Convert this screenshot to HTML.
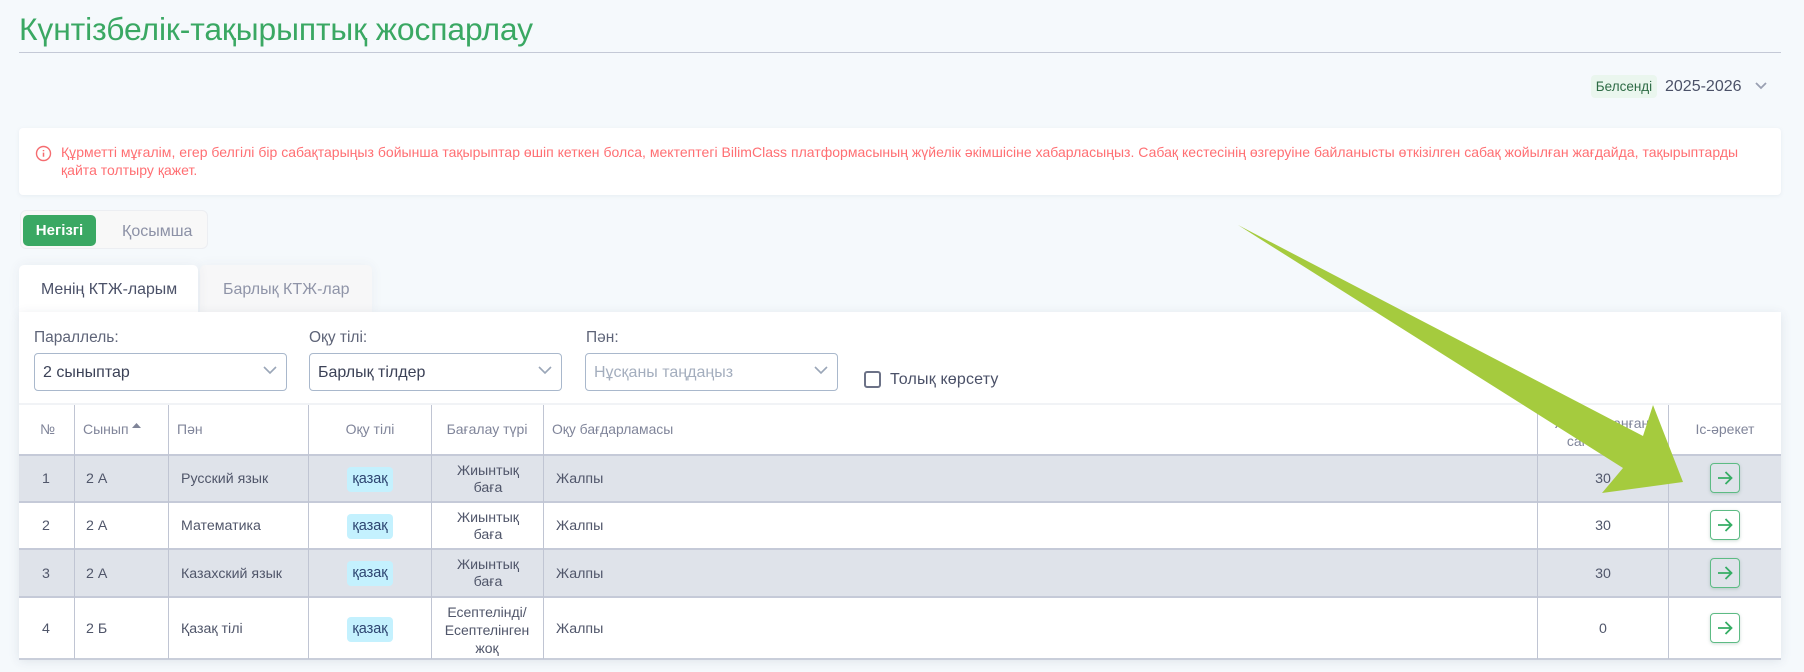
<!DOCTYPE html>
<html lang="kk"><head><meta charset="utf-8"><title>Күнтізбелік-тақырыптық жоспарлау</title>
<style>
html,body{margin:0;padding:0;width:1804px;height:672px;overflow:hidden;background:#f5f9fc}
body{position:relative;font-family:"Liberation Sans","DejaVu Sans",sans-serif;color:#4b5168}
.a{position:absolute;white-space:nowrap}
.c{text-align:center;transform:translateX(-50%)}
.box{position:absolute;background:#fff;box-sizing:border-box}
.sel{position:absolute;top:353px;width:253px;height:38px;box-sizing:border-box;border:1px solid #a9b8cc;border-radius:4px;background:#fff;font-size:16px;line-height:37px;padding-left:8px;color:#3c4257}
.sel svg{position:absolute;right:8px;top:11px}
.lb{font-size:15.5px;color:#5e6478;top:329px}
.h{font-size:14px;color:#80859a;top:422px}
.t{font-size:14.2px;color:#50566a}
.row{position:absolute;left:19px;width:1762px;box-sizing:border-box;border-bottom:2px solid #c5cad8}
.v{position:absolute;top:405px;width:1px;height:254px;background:#c0c5d3}
.tag{position:absolute;left:347px;width:46px;height:25px;background:#c4f1fe;border-radius:4px;font-size:14.5px;line-height:25px;text-align:center;color:#2c4470}
.btn{position:absolute;left:1710px;width:27.5px;height:27.5px;border:1.5px solid #5dbb84;border-radius:4px;box-shadow:0 1px 3px rgba(60,120,90,.25)}
.btn svg{position:absolute;left:3.750px;top:3.750px}
</style></head><body>
<div class="a" style="left:19px;top:9px;font-size:31.8px;line-height:40px;color:#3aa863;letter-spacing:-.1px">Күнтізбелік-тақырыптық жоспарлау</div>
<div class="a" style="left:19px;top:52px;width:1762px;height:1px;background:#c4c9d6"></div>

<div class="a" style="left:1591px;top:75px;width:66px;height:23px;background:#eaf6ee;border-radius:4px;font-size:13.5px;line-height:23px;text-align:center;color:#2d6b45">Белсенді</div>
<div class="a" style="left:1665px;top:76px;font-size:16px;line-height:22px;color:#4b5168">2025-2026</div>
<svg class="a" style="left:1754px;top:81px" width="14" height="10" viewBox="0 0 14 10"><path d="M2 2l5 5 5-5" fill="none" stroke="#9aa0b2" stroke-width="1.8"/></svg>

<div class="box" style="left:19px;top:128px;width:1762px;height:67px;border-radius:4px;box-shadow:0 1px 4px rgba(70,90,120,.08)"></div>
<svg class="a" style="left:35px;top:145px" width="17" height="17" viewBox="0 0 17 17"><circle cx="8.500" cy="8.500" r="7" fill="none" stroke="#f56c70" stroke-width="1.4"/><path d="M8.500 7.600v4.200M8.500 5v1.300" stroke="#f56c70" stroke-width="1.500"/></svg>
<div class="a" style="left:61px;top:143px;font-size:14px;line-height:18.4px;color:#ff6f73;letter-spacing:.02px">Құрметті мұғалім, егер белгілі бір сабақтарыңыз бойынша тақырыптар өшіп кеткен болса, мектептегі BilimClass платформасының жүйелік әкімшісіне хабарласыңыз. Сабақ кестесінің өзгеруіне байланысты өткізілген сабақ жойылған жағдайда, тақырыптарды<br>қайта толтыру қажет.</div>

<div class="box" style="left:20px;top:210px;width:188px;height:39px;background:#f8f8f8;border:1px solid #eceef2;border-radius:6px"></div>
<div class="a" style="left:23px;top:215px;width:73px;height:31px;background:#3aa863;border-radius:5px;color:#fff;font-size:15px;font-weight:bold;line-height:32px;text-align:center">Негізгі</div>
<div class="a" style="left:122px;top:223px;font-size:16px;line-height:18px;color:#8c91a6">Қосымша</div>

<div class="box" style="left:200px;top:265px;width:172px;height:50px;background:#f7f7f8;border-radius:5px 5px 0 0;box-shadow:0 0 12px rgba(60,70,100,.06)"></div>
<div class="box" style="left:19px;top:265px;width:179px;height:50px;border-radius:5px 5px 0 0;box-shadow:0 0 12px rgba(60,70,100,.07)"></div>
<div class="a" style="left:41px;top:281px;font-size:15.9px;line-height:18px;color:#4b5168">Менің КТЖ-ларым</div>
<div class="a" style="left:223px;top:281px;font-size:16px;line-height:18px;color:#8f94a8">Барлық КТЖ-лар</div>

<div class="box" style="left:19px;top:312px;width:1762px;height:347px;box-shadow:0 2px 10px rgba(60,70,100,.12)"></div>

<div class="a lb" style="left:34px">Параллель:</div>
<div class="a lb" style="left:309px">Оқу тілі:</div>
<div class="a lb" style="left:586px">Пән:</div>
<div class="sel" style="left:34px">2 сыныптар<svg width="16" height="12" viewBox="0 0 16 12"><path d="M2 2l6 6 6-6" fill="none" stroke="#9aa6b8" stroke-width="1.6"/></svg></div>
<div class="sel" style="left:309px">Барлық тілдер<svg width="16" height="12" viewBox="0 0 16 12"><path d="M2 2l6 6 6-6" fill="none" stroke="#9aa6b8" stroke-width="1.6"/></svg></div>
<div class="sel" style="left:585px;color:#a4aebe">Нұсқаны таңдаңыз<svg width="16" height="12" viewBox="0 0 16 12"><path d="M2 2l6 6 6-6" fill="none" stroke="#9aa6b8" stroke-width="1.6"/></svg></div>
<div class="a" style="left:864px;top:371px;width:17px;height:17px;box-sizing:border-box;border:2px solid #6c7287;border-radius:3px;background:#fff"></div>
<div class="a" style="left:890px;top:370px;font-size:16px;line-height:20px;letter-spacing:.2px;color:#4b5168">Толық көрсету</div>

<div class="a" style="left:19px;top:403px;width:1762px;height:2px;background:#f1f3f6"></div>
<div class="row" style="top:405px;height:51px;background:#fff"></div>
<div class="row" style="top:456px;height:47px;background:#dfe3ea"></div>
<div class="row" style="top:503px;height:47px;background:#fff"></div>
<div class="row" style="top:550px;height:48px;background:#dfe3ea"></div>
<div class="row" style="top:598px;height:62px;background:#fff;border-bottom-color:#c9ceda"></div>

<div class="v" style="left:74px"></div><div class="v" style="left:168px"></div><div class="v" style="left:308px"></div><div class="v" style="left:431px"></div><div class="v" style="left:543px"></div><div class="v" style="left:1537px"></div><div class="v" style="left:1668px"></div>

<div class="a h" style="left:40px;top:421px">№</div>
<div class="a h" style="left:83px;top:421px">Сынып</div>
<svg class="a" style="left:132px;top:423px" width="9" height="6" viewBox="0 0 9 6"><path d="M4.500 0L9 5H0z" fill="#7f8498"/></svg>
<div class="a h" style="left:177px;top:421px">Пән</div>
<div class="a h c" style="left:370px;top:421px">Оқу тілі</div>
<div class="a h c" style="left:487px;top:421px">Бағалау түрі</div>
<div class="a h" style="left:552px;top:421px;font-size:13.9px">Оқу бағдарламасы</div>
<div class="a h c" style="left:1602px;top:414px;line-height:18px">Жоспарланған<br>сағат саны</div>
<div class="a h c" style="left:1725px;top:421px">Іс-әрекет</div>

<div class="a t c" style="left:46px;top:471px">1</div><div class="a t" style="left:86px;top:471px">2 А</div><div class="a t" style="left:181px;top:471px">Русский язык</div>
<div class="tag" style="top:467px">қазақ</div>
<div class="a t c" style="left:488px;top:463px;line-height:17px">Жиынтық<br>баға</div><div class="a t" style="left:556px;top:471px">Жалпы</div><div class="a t c" style="left:1603px;top:471px">30</div>

<div class="a t c" style="left:46px;top:518px">2</div><div class="a t" style="left:86px;top:518px">2 А</div><div class="a t" style="left:181px;top:518px">Математика</div>
<div class="tag" style="top:514px">қазақ</div>
<div class="a t c" style="left:488px;top:510px;line-height:17px">Жиынтық<br>баға</div><div class="a t" style="left:556px;top:518px">Жалпы</div><div class="a t c" style="left:1603px;top:518px">30</div>

<div class="a t c" style="left:46px;top:566px">3</div><div class="a t" style="left:86px;top:566px">2 А</div><div class="a t" style="left:181px;top:566px">Казахский язык</div>
<div class="tag" style="top:561px">қазақ</div>
<div class="a t c" style="left:488px;top:557px;line-height:17px">Жиынтық<br>баға</div><div class="a t" style="left:556px;top:566px">Жалпы</div><div class="a t c" style="left:1603px;top:566px">30</div>

<div class="a t c" style="left:46px;top:621px">4</div><div class="a t" style="left:86px;top:621px">2 Б</div><div class="a t" style="left:181px;top:621px">Қазақ тілі</div>
<div class="tag" style="top:617px">қазақ</div>
<div class="a t c" style="left:487px;top:603px;line-height:18px;font-size:14px">Есептелінді/<br>Есептелінген<br>жоқ</div><div class="a t" style="left:556px;top:621px">Жалпы</div><div class="a t c" style="left:1603px;top:621px">0</div>

<div class="btn" style="top:463px"><svg width="20" height="20" viewBox="0 0 20 20"><path d="M3 10h13.500M10.500 4L16.500 10l-6 6" fill="none" stroke="#35ad64" stroke-width="1.800"/></svg></div>
<div class="btn" style="top:510px"><svg width="20" height="20" viewBox="0 0 20 20"><path d="M3 10h13.500M10.500 4L16.500 10l-6 6" fill="none" stroke="#35ad64" stroke-width="1.800"/></svg></div>
<div class="btn" style="top:558px"><svg width="20" height="20" viewBox="0 0 20 20"><path d="M3 10h13.500M10.500 4L16.500 10l-6 6" fill="none" stroke="#35ad64" stroke-width="1.800"/></svg></div>
<div class="btn" style="top:613px"><svg width="20" height="20" viewBox="0 0 20 20"><path d="M3 10h13.500M10.500 4L16.500 10l-6 6" fill="none" stroke="#35ad64" stroke-width="1.800"/></svg></div>

<svg class="a" style="left:0;top:0" width="1804" height="672" viewBox="0 0 1804 672"><polygon points="1238,225 1643,436 1653,405 1683,482 1602,493 1623,468" fill="#a5cb3e"/></svg>
</body></html>
